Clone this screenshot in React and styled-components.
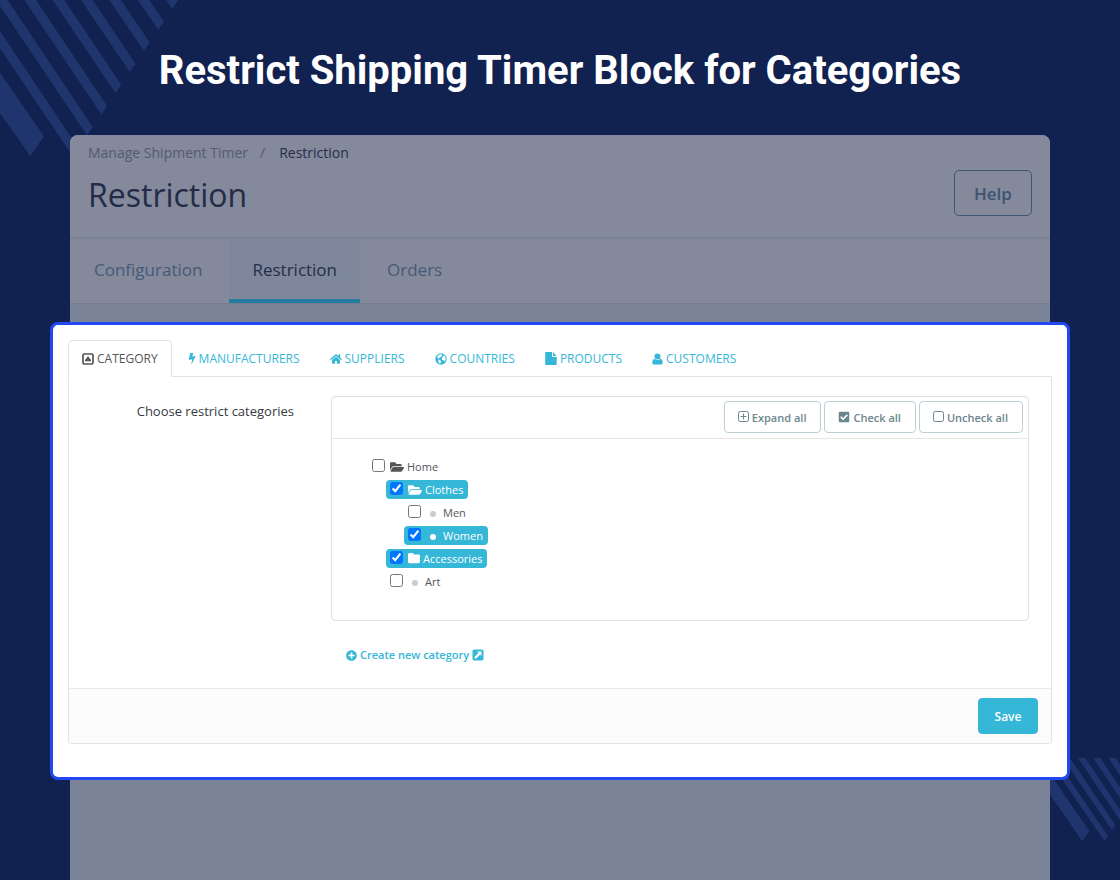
import React, { useState } from "react";
import styled, { createGlobalStyle } from "styled-components";
import {
  FaCheckSquare,
  FaFolderOpen,
  FaHome,
  FaPlusCircle,
} from "react-icons/fa";

const GlobalStyle = createGlobalStyle`
  * {
    box-sizing: border-box;
  }

  body {
    margin: 0;
    background: #112150;
    font-family: "Open Sans", "Noto Sans", sans-serif;
  }

  button {
    font-family: inherit;
    cursor: pointer;
  }
`;

const Page = styled.main`
  position: relative;
  display: flex;
  flex-direction: column;
  min-height: 100vh;
  padding: 0 70px;
  overflow: hidden;
  background: #112150;
`;

const Stripes = styled.svg`
  position: absolute;
  fill: #20356d;
`;

const TopStripes = styled(Stripes)`
  top: 0;
  left: 0;
  width: 180px;
  height: 160px;
`;

const BottomStripes = styled(Stripes)`
  right: 0;
  bottom: 35px;
  width: 80px;
  height: 100px;
`;

const Title = styled.h1`
  margin: 0;
  padding: 47px 0 40px;
  color: #fff;
  font: 700 40px/48px Roboto, sans-serif;
  text-align: center;
`;

const Screen = styled.div`
  position: relative;
  display: flex;
  flex: 1;
  flex-direction: column;
  border-radius: 8px 8px 0 0;
  background: #7b8397;
`;

const Header = styled.header`
  padding: 8px 18px 0;
  height: 104px;
  border-bottom: 2px solid #7a8295;
  border-radius: 8px 8px 0 0;
  background: #84899c;
`;

const Breadcrumb = styled.nav`
  display: flex;
  gap: 12px;
  color: #525b71;
  font-size: 14px;
  line-height: 20px;

  a {
    color: inherit;
    text-decoration: none;
  }

  strong {
    margin-left: 2px;
    color: #252e49;
    font-weight: 400;
  }
`;

const HeaderRow = styled.div`
  display: flex;
  align-items: flex-start;
  justify-content: space-between;
  padding-top: 7px;
`;

const Heading = styled.h2`
  margin: 0;
  color: #232c47;
  font-size: 32px;
  font-weight: 400;
  line-height: 50px;
`;

const HelpButton = styled.button`
  width: 78px;
  height: 46px;
  padding: 0;
  border: 1px solid #3f5672;
  border-radius: 5px;
  background: none;
  color: #3f5470;
  font-size: 17px;
  font-weight: 600;
`;

const PageTabs = styled.nav`
  display: flex;
  gap: 4px;
  height: 65px;
  padding-left: 1px;
  border-bottom: 1px solid #757d91;
  background: #84899c;
`;

const PageTab = styled.a`
  display: flex;
  align-items: center;
  padding: 0 23px;
  border-bottom: 4px solid ${({ $active }) => ($active ? "#237b9e" : "transparent")};
  background: ${({ $active }) => ($active ? "#7f879c" : "none")};
  color: ${({ $active }) => ($active ? "#252e49" : "#465a76")};
  font-size: 17px;
  text-decoration: none;
`;

const Callout = styled.section`
  margin: 18px -20px 0;
  padding: 15px 15px 33px;
  border: 3px solid #2148f3;
  border-radius: 8px;
  background: #fff;
`;

const Tabs = styled.div`
  display: flex;
  gap: 2px;
`;

const Tab = styled.button`
  position: relative;
  display: flex;
  align-items: center;
  gap: 3px;
  height: 37px;
  margin-bottom: -1px;
  padding: 0 13px;
  border: 1px solid ${({ $active }) => ($active ? "#e1e2e2" : "transparent")};
  border-bottom-color: ${({ $active }) => ($active ? "#fff" : "transparent")};
  border-radius: 5px 5px 0 0;
  background: ${({ $active }) => ($active ? "#fff" : "none")};
  color: ${({ $active }) => ($active ? "#555" : "#35b7d8")};
  font-size: 12px;
  line-height: 18px;
`;

const Panel = styled.div`
  border: 1px solid #e4e4e4;
  border-radius: 0 0 3px 3px;
  box-shadow: 0 0 1px #ddd;
`;

const PanelBody = styled.div`
  display: grid;
  grid-template-columns: 225px 1fr;
  column-gap: 37px;
  padding: 19px 22px 23px 0;
`;

const FieldLabel = styled.div`
  padding-top: 6px;
  color: #363a41;
  font-size: 13px;
  line-height: 18px;
  text-align: right;
`;

const TreeBox = styled.div`
  border: 1px solid #dfe1e2;
  border-radius: 5px;
  box-shadow: 0 0 1px #ddd;
`;

const Toolbar = styled.div`
  display: flex;
  justify-content: flex-end;
  gap: 3px;
  padding: 4px 5px 5px;
  border-bottom: 1px solid #e6e6e6;
`;

const ToolButton = styled.button`
  display: flex;
  align-items: center;
  gap: 3px;
  height: 32px;
  padding: 0 14px 0 13px;
  border: 1px solid #bcd0d6;
  border-radius: 4px;
  background: #fff;
  color: #6c868e;
  font-size: 11px;
  font-weight: 600;
`;

const Tree = styled.ul`
  margin: 0;
  padding: 16px 0 27px 36px;
  list-style: none;
`;

const Node = styled.li`
  display: flex;
  height: 23px;
  padding-left: ${({ $depth }) => $depth * 18}px;
`;

const NodeLabel = styled.label`
  display: flex;
  align-items: center;
  height: 19px;
  margin-top: 2px;
  padding: 0 5px 0 4px;
  border-radius: 4px;
  background: ${({ $selected }) => ($selected ? "#35b7d8" : "none")};
  color: ${({ $selected }) => ($selected ? "#fff" : "#555")};
  font-size: 11px;
  line-height: 18px;
`;

const Check = styled.input`
  width: 13px;
  height: 13px;
  margin: 0 5px 3px 0;
`;

const NodeIcon = styled.span`
  display: flex;
  justify-content: ${({ $bullet }) => ($bullet ? "center" : "flex-start")};
  width: ${({ $narrow }) => ($narrow ? 15 : 17)}px;
  padding-right: ${({ $bullet }) => ($bullet ? 3 : 0)}px;
  color: ${({ $selected, $bullet }) =>
    $selected ? "#fff" : $bullet ? "#ccc" : "#555"};
`;

const Bullet = styled.span`
  width: 6px;
  height: 6px;
  margin-top: 2px;
  border-radius: 50%;
  background: currentColor;
`;

const CreateLink = styled.a`
  display: flex;
  grid-column: 2;
  align-items: center;
  justify-self: start;
  gap: 3px;
  margin-top: 24px;
  padding-left: 15px;
  color: #35b7d8;
  font-size: 11px;
  font-weight: 600;
  line-height: 20px;
  text-decoration: none;
`;

const PanelFooter = styled.footer`
  display: flex;
  justify-content: flex-end;
  padding: 9px 13px;
  border-top: 1px solid #eaeaea;
  background: #fcfcfc;
`;

const SaveButton = styled.button`
  width: 60px;
  height: 36px;
  padding: 0;
  border: 1px solid #35b7d8;
  border-radius: 4px;
  background: #35b7d8;
  color: #fff;
  font-size: 12px;
  font-weight: 600;
`;

const CaretSquareIcon = () => (
  <svg width="12" height="12" viewBox="0 0 12 12" aria-hidden="true">
    <rect x="1" y="1" width="10" height="10" rx="1.2" fill="none" stroke="currentColor" strokeWidth="1.7" />
    <path d="M6 3.2 9 7v1.2H3V7z" fill="currentColor" />
  </svg>
);

const BoltIcon = () => (
  <svg width="8" height="12" viewBox="0 0 8 12" aria-hidden="true">
    <path d="M2.2 0h3.2L4.2 3.5 7.7 3 3.2 12l1-5.8L.6 7z" fill="currentColor" />
  </svg>
);

const GlobeIcon = () => (
  <svg width="12" height="12" viewBox="0 0 12 12" aria-hidden="true">
    <circle cx="6" cy="6" r="5.7" fill="currentColor" />
    <path
      d="M4.8 1.6 6.6 1.3l.9 1-1 .6-.7 1.2-1.2.5-.5 1-1.3-.4-.6-1.4.8-1.3zM7.9 3.3l1.5-.7 1 1.6.3 2-1.1 2.4-1.2-1.3-1.7-.8.3-1.5zM3.2 6.6l1.9.6 1.2 1.2-.9 1.8-1 .3-1-1.6z"
      fill="#fff"
    />
  </svg>
);

const FileIcon = () => (
  <svg width="12" height="13" viewBox="0 0 12 13" aria-hidden="true">
    <path d="M1 0h6v4.2c0 .4.3.7.7.7h4v7.3c0 .5-.3.8-.8.8H1c-.5 0-.8-.3-.8-.8V.8C.2.3.5 0 1 0zM8 .1l3.5 3.8H8z" fill="currentColor" />
  </svg>
);

const UserIcon = () => (
  <svg width="11" height="12" viewBox="0 0 11 12" aria-hidden="true">
    <circle cx="5.5" cy="3.5" r="3" fill="currentColor" />
    <path d="M2.7 5.8C1 6.1.3 7.7.3 9.7c0 1.2.7 1.8 1.7 1.8h7c1 0 1.7-.6 1.7-1.8 0-2-.7-3.6-2.4-3.9a3.9 3.9 0 0 1-5.6 0z" fill="currentColor" />
  </svg>
);

const SquareIcon = ({ plus }) => (
  <svg width="11" height="12" viewBox="0 0 11 12" aria-hidden="true">
    <g fill="none" stroke="currentColor">
      <rect x=".5" y=".5" width="10" height="10" rx="1.8" />
      {plus && <path d="M5.5 2.5v6M2.5 5.5h6" />}
    </g>
  </svg>
);

const FolderIcon = () => (
  <svg width="12" height="11" viewBox="0 0 12 11" aria-hidden="true">
    <path d="M1.5 0h2.8c.8 0 1.4.6 1.4 1.4h4.8c.8 0 1.5.6 1.5 1.4v6c0 .8-.7 1.5-1.5 1.5h-9C.7 10.300 0 9.600 0 8.800V1.500C0 .7.7 0 1.500 0z" fill="currentColor" />
  </svg>
);

const ExternalIcon = () => (
  <svg width="12" height="12" viewBox="0 0 12 12" aria-hidden="true">
    <rect x=".5" y=".5" width="11" height="11" rx="1.8" fill="currentColor" />
    <path d="M5 2.5h4.5V7L8.1 5.6 3.8 9.9 2.2 8.3l4.3-4.3z" fill="#fff" />
  </svg>
);

const TABS = [
  { name: "CATEGORY", icon: <CaretSquareIcon /> },
  { name: "MANUFACTURERS", icon: <BoltIcon /> },
  { name: "SUPPLIERS", icon: <FaHome size={12} /> },
  { name: "COUNTRIES", icon: <GlobeIcon /> },
  { name: "PRODUCTS", icon: <FileIcon /> },
  { name: "CUSTOMERS", icon: <UserIcon /> },
];

const CATEGORIES = [
  { name: "Home", depth: 0, icon: "open" },
  { name: "Clothes", depth: 1, icon: "open" },
  { name: "Men", depth: 2, icon: "bullet" },
  { name: "Women", depth: 2, icon: "bullet" },
  { name: "Accessories", depth: 1, icon: "closed" },
  { name: "Art", depth: 1, icon: "bullet" },
];

const nodeIcons = {
  open: <FaFolderOpen size={14} />,
  closed: <FolderIcon />,
  bullet: <Bullet />,
};

const TOP_STRIPES = [-2, -1, 0, 1, 2, 3, 4, 5];
const BOTTOM_STRIPES = [0, 1, 2, 3, 4];

function CategoryTree({ checked, onToggle }) {
  return (
    <Tree>
      {CATEGORIES.map(({ name, depth, icon }) => {
        const selected = checked.includes(name);
        return (
          <Node key={name} $depth={depth}>
            <NodeLabel $selected={selected}>
              <Check type="checkbox" checked={selected} onChange={() => onToggle(name)} />
              <NodeIcon
                $selected={selected}
                $bullet={icon === "bullet"}
                $narrow={icon === "closed"}
              >
                {nodeIcons[icon]}
              </NodeIcon>
              {name}
            </NodeLabel>
          </Node>
        );
      })}
    </Tree>
  );
}

export default function App() {
  const [tab, setTab] = useState("CATEGORY");
  const [checked, setChecked] = useState(["Clothes", "Women", "Accessories"]);

  const toggle = name =>
    setChecked(
      checked.includes(name) ? checked.filter(c => c !== name) : [...checked, name]
    );

  return (
    <Page>
      <GlobalStyle />
      <TopStripes viewBox="0 0 540 480" aria-hidden="true">
        <path d="M0 218 132 409 91 468 0 340z" />
        {TOP_STRIPES.map(k => (
          <path
            key={k}
            d={`M${73 + 85 * k} 0H${108 + 85 * k}L${321 + 42.7 * k} ${318 - 63.4 * k}L${304 + 42.7 * k} ${343 - 63.4 * k}z`}
          />
        ))}
      </TopStripes>
      <BottomStripes viewBox="0 0 240 300" aria-hidden="true">
        <path d="M0 105 127 289 148 258 0 43z" />
        {BOTTOM_STRIPES.map(k => (
          <path
            key={k}
            d={`M${22 + 46 * k} 39h22L${204 + 22 * k} ${273 - 33 * k}L${194 + 22 * k} ${289 - 33 * k}z`}
          />
        ))}
      </BottomStripes>
      <Title>Restrict Shipping Timer Block for Categories</Title>
      <Screen>
        <Header>
          <Breadcrumb>
            <a href="#manage">Manage Shipment Timer</a>
            <span>/</span>
            <strong>Restriction</strong>
          </Breadcrumb>
          <HeaderRow>
            <Heading>Restriction</Heading>
            <HelpButton type="button">Help</HelpButton>
          </HeaderRow>
        </Header>
        <PageTabs>
          <PageTab href="#configuration">Configuration</PageTab>
          <PageTab href="#restriction" $active>
            Restriction
          </PageTab>
          <PageTab href="#orders">Orders</PageTab>
        </PageTabs>
        <Callout>
          <Tabs role="tablist">
            {TABS.map(({ name, icon }) => (
              <Tab
                key={name}
                type="button"
                role="tab"
                aria-selected={tab === name}
                $active={tab === name}
                onClick={() => setTab(name)}
              >
                {icon}
                {name}
              </Tab>
            ))}
          </Tabs>
          <Panel>
            <PanelBody>
              <FieldLabel id="tree-label">Choose restrict categories</FieldLabel>
              <TreeBox role="group" aria-labelledby="tree-label">
                <Toolbar>
                  <ToolButton type="button">
                    <SquareIcon plus />
                    Expand all
                  </ToolButton>
                  <ToolButton
                    type="button"
                    onClick={() => setChecked(CATEGORIES.map(c => c.name))}
                  >
                    <FaCheckSquare size={12} />
                    Check all
                  </ToolButton>
                  <ToolButton type="button" onClick={() => setChecked([])}>
                    <SquareIcon />
                    Uncheck all
                  </ToolButton>
                </Toolbar>
                <CategoryTree checked={checked} onToggle={toggle} />
              </TreeBox>
              <CreateLink href="#new">
                <FaPlusCircle size={11} />
                Create new category
                <ExternalIcon />
              </CreateLink>
            </PanelBody>
            <PanelFooter>
              <SaveButton type="button">Save</SaveButton>
            </PanelFooter>
          </Panel>
        </Callout>
      </Screen>
    </Page>
  );
}
